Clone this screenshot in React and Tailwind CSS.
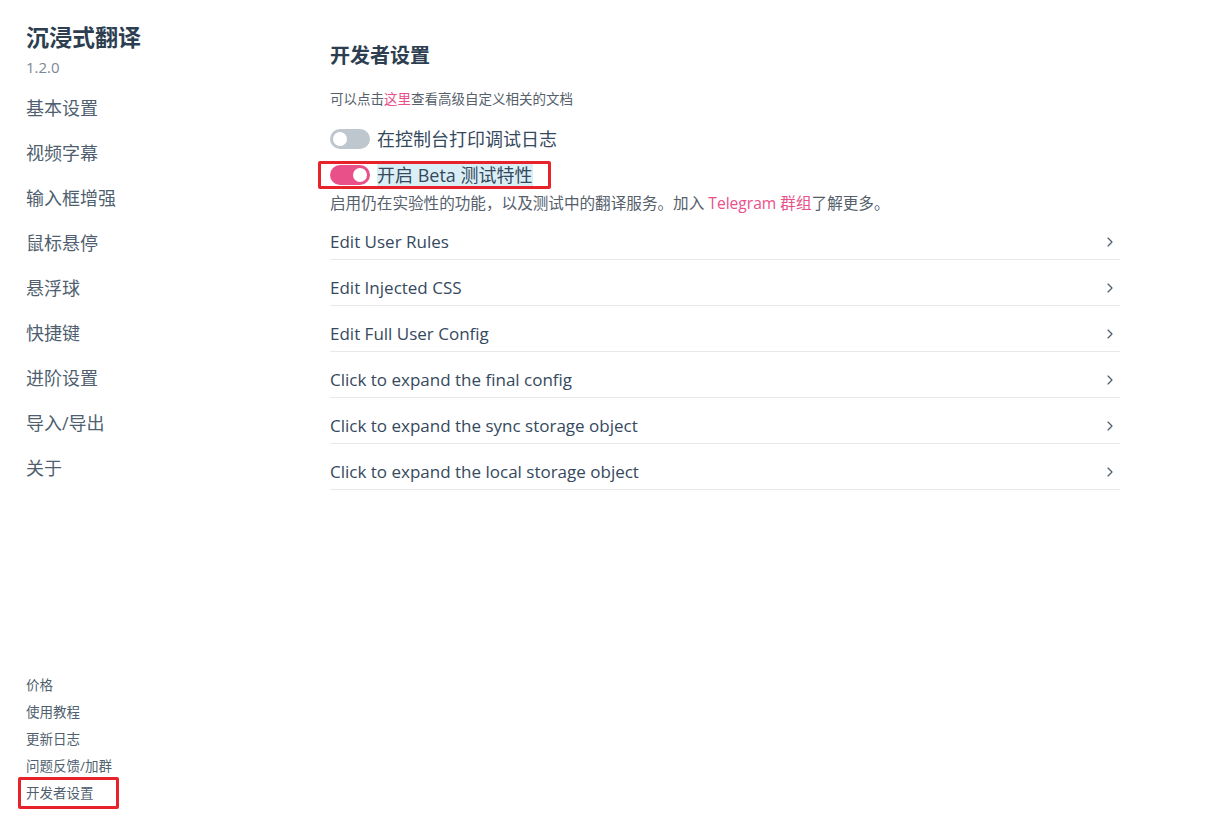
import { ChevronRight } from "lucide-react";

const font = {
  fontFamily: '"Open Sans", "Noto Sans CJK SC", sans-serif',
};

const navItems = ["基本设置", "视频字幕", "输入框增强", "鼠标悬停", "悬浮球", "快捷键", "进阶设置", "导入/导出", "关于"];
const footerLinks = ["价格", "使用教程", "更新日志", "问题反馈/加群"];
const rows = [
  "Edit User Rules",
  "Edit Injected CSS",
  "Edit Full User Config",
  "Click to expand the final config",
  "Click to expand the sync storage object",
  "Click to expand the local storage object",
];

function Toggle({ on }) {
  return (
    <div
      className={`relative h-[20px] w-[40px] shrink-0 rounded-full ${on ? "bg-[#e9508a]" : "bg-[#bec6ce]"}`}
    >
      <div
        className={`absolute top-[3px] h-[14px] w-[14px] rounded-full bg-white ${on ? "left-[23px]" : "left-[3px]"}`}
      />
    </div>
  );
}

export default function App() {
  return (
    <div style={font} className="flex h-[829px] w-[1230px] bg-white text-[#35495e]">
      {/* sidebar */}
      <div className="flex w-[304px] shrink-0 flex-col pl-[26px]">
        <div className="pt-[22px] text-[23px] font-bold leading-[30px] text-[#2c3e50]">沉浸式翻译</div>
        <div className="mt-[6px] text-[15px] leading-[18px] text-[#7b8794]">1.2.0</div>
        <div className="mt-[20px] flex flex-col">
          {navItems.map((n) => (
            <div key={n} className="h-[45px] text-[18px] leading-[24px] text-[#4f5f6f]">
              {n}
            </div>
          ))}
        </div>
        <div className="mt-auto mb-[20px] flex flex-col">
          {footerLinks.map((n) => (
            <div key={n} className="h-[27px] text-[13.5px] leading-[27px] text-[#4f5f6f]">
              {n}
            </div>
          ))}
          <div className="-ml-[8px] -mt-[3px] flex h-[32px] w-[101px] items-center rounded-[2px] border-[3px] border-[#e8222b] pl-[5px] text-[13.5px] leading-[20px] text-[#4f5f6f]">
            开发者设置
          </div>
        </div>
      </div>

      {/* main */}
      <div className="flex w-[816px] flex-col pl-[26px]">
        <div className="pt-[42px] text-[20px] font-bold leading-[28px] text-[#2c3e50]">开发者设置</div>
        <div className="mt-[20px] text-[13.5px] leading-[18px] text-[#55606b]">
          可以点击<span className="text-[#e9508a]">这里</span>查看高级自定义相关的文档
        </div>
        <div className="mt-[19px] flex h-[24px] items-center gap-[7px]">
          <Toggle on={false} />
          <span className="text-[18px] leading-[24px] text-[#35495e]">在控制台打印调试日志</span>
        </div>
        <div className="-ml-[12px] mt-[10px] flex h-[28px] w-[233px] items-center gap-[7px] rounded-[2px] border-[3px] border-[#e8222b] pl-[9px]">
          <Toggle on={true} />
          <span className="bg-[#d9eff5] text-[18px] leading-[22px] text-[#35495e]">开启 Beta 测试特性</span>
        </div>
        <div className="mt-[4px] text-[15.6px] leading-[20px] text-[#55606b]">
          启用仍在实验性的功能，以及测试中的翻译服务。加入 <span className="text-[#e9508a]">Telegram 群组</span>了解更多。
        </div>
        <div className="mt-[1px] flex flex-col">
          {rows.map((r) => (
            <div
              key={r}
              className="flex h-[46px] items-start justify-between border-b border-[#e6e8eb] pt-[16px] pr-[2px]"
            >
              <span className="text-[17px] leading-[24px] text-[#35495e]">{r}</span>
              <ChevronRight size={16} strokeWidth={1.75} className="mt-[4px] text-[#4a5a6a]" />
            </div>
          ))}
        </div>
      </div>
    </div>
  );
}
